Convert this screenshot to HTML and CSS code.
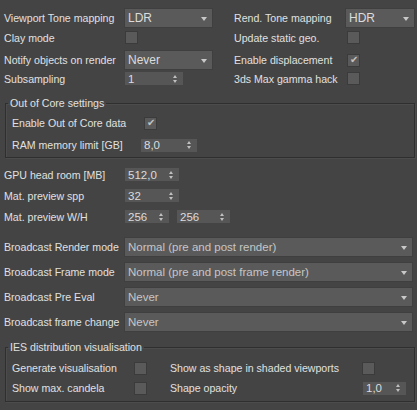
FILE: index.html
```html
<!DOCTYPE html>
<html>
<head>
<meta charset="utf-8">
<link rel="stylesheet" href="styles.css">
</head>
<body>
<div class="panel">
  <div class="top">
    <div class="row r1">
      <span class="lbl lw120">Viewport Tone mapping</span>
      <div class="cell c89"><div class="dd w89"><span class="ddt">LDR</span><i class="arr"></i></div></div>
      <span class="lbl rl">Rend. Tone mapping</span>
      <div class="dd w70"><span class="ddt">HDR</span><i class="arr"></i></div>
    </div>
    <div class="row r2">
      <span class="lbl lw120">Clay mode</span>
      <div class="cell c89"><span class="cb cbl"></span></div>
      <span class="lbl rl">Update static geo.</span>
      <span class="cb cbr"></span>
    </div>
    <div class="row r3">
      <span class="lbl lw120">Notify objects on render</span>
      <div class="cell c89"><div class="dd w89"><span class="ddt">Never</span><i class="arr"></i></div></div>
      <span class="lbl rl">Enable displacement</span>
      <span class="cb cbr checked">&#x2714;</span>
    </div>
    <div class="row r4">
      <span class="lbl lw120">Subsampling</span>
      <div class="cell c89"><div class="sp w60"><span>1</span><i class="spa"></i></div></div>
      <span class="lbl rl">3ds Max gamma hack</span>
      <span class="cb cbr"></span>
    </div>
  </div>

  <fieldset class="grp ooc">
    <legend>Out of Core settings</legend>
    <div class="grow g22">
      <span class="lbl ow1">Enable Out of Core data</span>
      <span class="cb checked">&#x2714;</span>
    </div>
    <div class="grow g22">
      <span class="lbl ow2">RAM memory limit [GB]</span>
      <div class="sp w58"><span>8,0</span><i class="spa"></i></div>
    </div>
  </fieldset>

  <div class="mid">
    <div class="row r21">
      <span class="lbl lw120">GPU head room [MB]</span>
      <div class="sp w56"><span>512,0</span><i class="spa"></i></div>
    </div>
    <div class="row r21">
      <span class="lbl lw120">Mat. preview spp</span>
      <div class="sp w56"><span>32</span><i class="spa"></i></div>
    </div>
    <div class="row r21">
      <span class="lbl lw120">Mat. preview W/H</span>
      <div class="sp w46"><span>256</span><i class="spa"></i></div>
      <div class="sp w55 gap6"><span>256</span><i class="spa"></i></div>
    </div>
  </div>

  <div class="bc">
    <div class="row bcr">
      <span class="lbl lw120">Broadcast Render mode</span>
      <div class="dd wide"><span class="ddt dim">Normal (pre and post render)</span><i class="arr"></i></div>
    </div>
    <div class="row bcr">
      <span class="lbl lw120">Broadcast Frame mode</span>
      <div class="dd wide"><span class="ddt dim">Normal (pre and post frame render)</span><i class="arr"></i></div>
    </div>
    <div class="row bcr">
      <span class="lbl lw120">Broadcast Pre Eval</span>
      <div class="dd wide"><span class="ddt dim">Never</span><i class="arr"></i></div>
    </div>
    <div class="row bcr">
      <span class="lbl lw120">Broadcast frame change</span>
      <div class="dd wide"><span class="ddt dim">Never</span><i class="arr"></i></div>
    </div>
  </div>

  <fieldset class="grp ies">
    <legend>IES distribution visualisation</legend>
    <div class="grow g20">
      <span class="lbl iw">Generate visualisation</span>
      <span class="cb"></span>
      <span class="lbl iw2">Show as shape in shaded viewports</span>
      <span class="cb"></span>
    </div>
    <div class="grow g20">
      <span class="lbl iw">Show max. candela</span>
      <span class="cb"></span>
      <span class="lbl iw2">Shape opacity</span>
      <div class="sp w45"><span>1,0</span><i class="spa"></i></div>
    </div>
  </fieldset>
</div>
</body>
</html>
```

FILE: styles.css
```css
html, body {
  margin: 0;
  padding: 0;
  background: #444444;
}
body {
  width: 417px;
  height: 410px;
  overflow: hidden;
  font-family: "Liberation Sans", Arial, sans-serif;
  font-size: 10.6px;
  color: #e0e0e0;
}
.panel {
  display: flex;
  flex-direction: column;
}
.row {
  display: flex;
  align-items: center;
  padding-left: 4px;
}
.top { padding-top: 8px; }
.r1 { height: 20px; }
.r2 { height: 19px; }
.r3 { height: 20px; margin-top: 3px; }
.r4 { height: 17px; }
.lbl {
  white-space: nowrap;
  flex: none;
}
.lw120 { width: 120px; }
.rl { width: 111px; margin-left: 21px; }
.cell { flex: none; display: flex; align-items: center; }
.c89 { width: 89px; }

.dd {
  box-sizing: border-box;
  height: 20px;
  background: #5a5a5a;
  border: 1px solid #3f3f3f;
  display: flex;
  align-items: center;
  justify-content: space-between;
  padding: 0 5px 0 3px;
  flex: none;
}
.w89 { width: 89px; }
.w70 { width: 70px; }
.wide { width: 289px; }
.ddt { color: #dcdcdc; font-size: 12px; }
.ddt.dim { color: #c6c6c6; font-size: 11.5px; }
.arr {
  width: 0;
  height: 0;
  border-left: 3px solid transparent;
  border-right: 3px solid transparent;
  border-top: 4px solid #c8c8c8;
  margin-top: 1px;
}

.cb {
  box-sizing: border-box;
  width: 13px;
  height: 13px;
  flex: none;
  background: #5a5a5a;
  border: 1px solid #3b3b3b;
  display: flex;
  align-items: center;
  justify-content: center;
  font-size: 10px;
  line-height: 1;
  color: #c2c2c2;
}
.cbl { margin-left: 1px; }
.cbr { margin-left: 2px; }

.sp {
  box-sizing: border-box;
  height: 15px;
  background: #565656;
  border: 1px solid #444;
  display: flex;
  align-items: center;
  justify-content: space-between;
  padding: 0 5px 0 3px;
  flex: none;
  color: #dcdcdc;
  font-size: 11.5px;
}
.w60 { width: 60px; }
.w58 { width: 58px; }
.w56 { width: 56px; }
.w46 { width: 46px; }
.w55 { width: 55px; }
.w45 { width: 45px; }
.gap6 { margin-left: 6px; }
.spa {
  width: 5px;
  height: 8px;
  position: relative;
  flex: none;
}
.spa::before, .spa::after {
  content: "";
  position: absolute;
  left: 0;
  width: 0;
  height: 0;
  border-left: 2.5px solid transparent;
  border-right: 2.5px solid transparent;
}
.spa::before { top: 0; border-bottom: 3px solid #c0c0c0; }
.spa::after { bottom: 0; border-top: 3px solid #c0c0c0; }

.grp {
  margin: 0 2px 0 5px;
  padding: 0 0 0 6px;
  border: 1px solid #2f2f2f;
  box-shadow: inset 1px 1px 0 #4c4c4c, 1px 1px 0 #4c4c4c;
  min-width: 0;
}
.grp legend {
  padding: 0 2px;
  margin-left: -4px;
  line-height: 14px;
  color: #e0e0e0;
}
.ooc { margin-top: 9px; padding-top: 2px; padding-bottom: 1px; }
.grow { display: flex; align-items: center; }
.g22 { height: 22px; }
.g20 { height: 20px; }
.ow1 { width: 132px; }
.ow2 { width: 128px; }

.mid { margin-top: 6px; }
.r21 { height: 21px; }

.bc { margin-top: 10px; display: flex; flex-direction: column; gap: 5px; }
.bcr { height: 20px; }

.ies { margin-top: 8px; padding-top: 4px; padding-bottom: 3px; }
.iw { width: 122px; }
.iw2 { width: 192px; margin-left: 23px; }
```
